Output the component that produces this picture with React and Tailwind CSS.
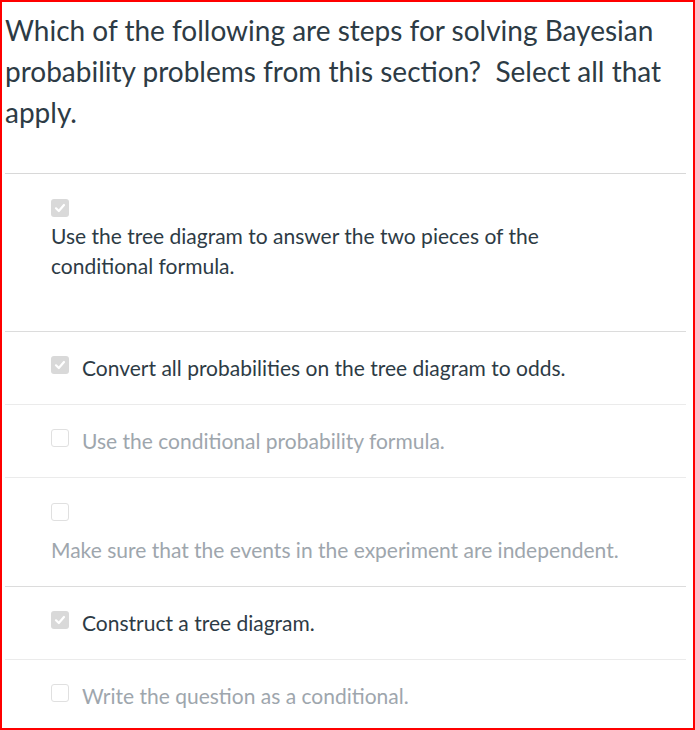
import React from 'react';

const answers = [
  { text: 'Use the tree diagram to answer the two pieces of the conditional formula.', checked: true, stacked: true, gap: 'mt-[4px]', pb: 'pb-[50px]', maxw: 'max-w-[545px]', line: 'border-[#dcdcdc]' },
  { text: 'Convert all probabilities on the tree diagram to odds.', checked: true, line: 'border-[#dcdcdc]' },
  { text: 'Use the conditional probability formula.', checked: false, line: 'border-[#ebebeb]' },
  { text: 'Make sure that the events in the experiment are independent.', checked: false, stacked: true, gap: 'mt-[14px]', pb: 'pb-[21px]', maxw: 'max-w-[610px]', line: 'border-[#ebebeb]' },
  { text: 'Construct a tree diagram.', checked: true, line: 'border-[#dcdcdc]' },
  { text: 'Write the question as a conditional.', checked: false, line: 'border-[#ebebeb]' },
];

function Box({ checked }) {
  if (checked) {
    return (
      <span className="flex h-[18px] w-[18px] shrink-0 items-center justify-center rounded-[3px] bg-[#d9d9d9]">
        <svg width="12" height="12" viewBox="0 0 12 12" fill="none">
          <path d="M2 6.3 L4.8 9 L10 3" stroke="#ffffff" strokeWidth="2.2" strokeLinecap="round" strokeLinejoin="round" />
        </svg>
      </span>
    );
  }
  return <span className="block h-[18px] w-[18px] shrink-0 rounded-[3px] border border-[#e0e0e0] bg-white" />;
}

export default function App() {
  return (
    <div className="h-[730px] w-[695px] overflow-hidden border-2 border-[#ff0000] bg-white pl-[3px] pr-[7px] pt-[8px] font-['Lato',sans-serif]">
      <div className="pb-[40px] text-[28px] leading-[41px] text-[#2d3b45]">
        Which of the following are steps for solving Bayesian probability problems from this section?{'\u00a0'} Select all that apply.
      </div>

      {answers.map((a, i) => {
        const color = a.checked ? 'text-[#2d3b45]' : 'text-[#9ea6ad]';
        if (a.stacked) {
          return (
            <div key={i} className={`border-t ${i === 0 ? 'border-[#d8d8d8]' : a.line} pl-[46px] pt-[25px] ${a.pb}`}>
              <Box checked={a.checked} />
              <div className={`${a.gap} ${a.maxw} text-[21px] leading-[30px] ${color}`}>{a.text}</div>
            </div>
          );
        }
        return (
          <div key={i} className={`flex h-[73px] items-center gap-[13px] border-t ${a.line} pl-[46px]`}>
            <span className="mb-[6px]">
              <Box checked={a.checked} />
            </span>
            <span className={`text-[21px] leading-[30px] ${color}`}>{a.text}</span>
          </div>
        );
      })}
    </div>
  );
}
